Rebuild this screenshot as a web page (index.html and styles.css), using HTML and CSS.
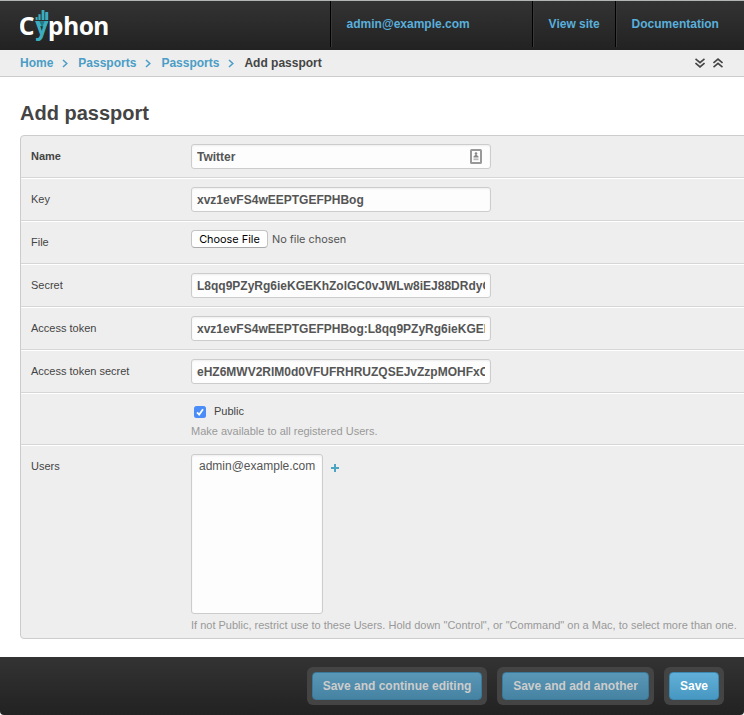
FILE: index.html
```html
<!DOCTYPE html>
<html lang="en">
<head>
<meta charset="utf-8">
<title>Add passport | Cyphon</title>
<link rel="stylesheet" href="styles.css">
</head>
<body>
<header class="topbar">
  <svg class="logo" width="100" height="48" viewBox="0 0 100 48" role="img" aria-label="Cyphon">
    <text class="word" y="33.5" x="-1.2">C</text>
    <text class="word" y="33.5" x="28 43.2 58.8 73.2">phon</text>
    <text class="word teal" x="15.3" y="33.5" textLength="13" lengthAdjust="spacingAndGlyphs">y</text>
    <g class="bars">
      <rect x="15.6" y="16" width="2" height="3"/>
      <rect x="18.4" y="13.2" width="2.2" height="5.8"/>
      <rect x="21.6" y="9" width="2.8" height="10"/>
      <rect x="25.2" y="11" width="3" height="8"/>
    </g>
    <path class="bars" d="M15.6 20.2h12.6l-1.8 4.8h-8.8z"/>
    <path class="facet" d="M19.5 20.5h5l-2.3 6z"/>
  </svg>
  <nav class="tools">
    <a class="user">admin@example.com</a>
    <a class="site">View site</a>
    <a class="docs">Documentation</a>
  </nav>
</header>
<div class="crumbs">
  <a>Home</a>
  <svg class="sep" width="6" height="9" viewBox="0 0 6 9"><path d="M1 1l3.8 3.5L1 8"/></svg>
  <a>Passports</a>
  <svg class="sep" width="6" height="9" viewBox="0 0 6 9"><path d="M1 1l3.8 3.5L1 8"/></svg>
  <a>Passports</a>
  <svg class="sep" width="6" height="9" viewBox="0 0 6 9"><path d="M1 1l3.8 3.5L1 8"/></svg>
  <span>Add passport</span>
  <div class="toggles">
    <svg width="10" height="10" viewBox="0 0 10 10"><path d="M.5 .8L5 4.7 9.5.8M.5 5L5 8.9 9.5 5"/></svg>
    <svg width="10" height="10" viewBox="0 0 10 10"><path d="M.5 5L5 1.1 9.5 5M.5 9.2L5 5.3 9.5 9.2"/></svg>
  </div>
</div>
<main>
  <h1>Add passport</h1>
  <section class="module">
    <div class="row first"><label class="required">Name</label>
      <div class="field"><span class="value">Twitter</span>
        <svg class="contact" width="12" height="15" viewBox="0 0 12 15"><rect x="1" y="1" width="10" height="13" rx=".6"/><circle cx="6" cy="4.6" r="1.3"/><path d="M3.5 8.4V7.4L5.2 6h1.6l1.7 1.4v1z"/><path class="base" d="M3.5 9.4h5v1.8h-5z"/></svg>
      </div></div>
    <div class="row"><label>Key</label><div class="field"><span class="value">xvz1evFS4wEEPTGEFPHBog</span></div></div>
    <div class="row"><label>File</label><div class="file"><button class="choose">Choose File</button><span>No file chosen</span></div></div>
    <div class="row"><label>Secret</label><div class="field"><span class="value">L8qq9PZyRg6ieKGEKhZolGC0vJWLw8iEJ88DRdyOg</span></div></div>
    <div class="row"><label>Access token</label><div class="field"><span class="value">xvz1evFS4wEEPTGEFPHBog:L8qq9PZyRg6ieKGEKhZol</span></div></div>
    <div class="row"><label>Access token secret</label><div class="field"><span class="value">eHZ6MWV2RlM0d0VFUFRHRUZQSEJvZzpMOHFxOVBa</span></div></div>
    <div class="row public">
      <div class="check">
        <svg width="12" height="12" viewBox="0 0 12 12"><rect width="12" height="12" rx="2.5"/><path d="M3 6.4l2.2 2.2L9 3.2"/></svg>
        <span>Public</span>
      </div>
      <p class="help">Make available to all registered Users.</p>
    </div>
    <div class="row users"><label>Users</label>
      <div class="content">
        <div class="picker"><div class="select">admin@example.com</div>
          <svg class="plus" width="8" height="8" viewBox="0 0 8 8"><path d="M4 0v8M0 4h8"/></svg></div>
        <p class="help">If not Public, restrict use to these Users. Hold down "Control", or "Command" on a Mac, to select more than one.</p>
      </div></div>
  </section>
</main>
<footer>
  <div class="wrap dim continue"><button>Save and continue editing</button></div>
  <div class="wrap dim another"><button>Save and add another</button></div>
  <div class="wrap save"><button>Save</button></div>
</footer>
</body>
</html>
```
FILE: styles.css
```css
* { box-sizing: border-box; }
body {
  margin: 0;
  height: 715px;
  overflow: hidden;
  display: flex;
  flex-direction: column;
  background: #fff;
  color: #444;
  font: 11px/15px "Liberation Sans", Arial, sans-serif;
}
svg { display: block; flex: none; }
a { color: #309bbf; white-space: nowrap; }
button { font-family: inherit; white-space: nowrap; padding: 0; }

.topbar {
  height: 50px;
  flex: none;
  display: flex;
  justify-content: space-between;
  border-top: 1px solid #b2b5b4;
  padding-left: 20px;
  background: linear-gradient(#333, #222);
}
.word { font: bold 24.5px "Noto Sans", sans-serif; fill: #fff; }
.word.teal { fill: #3badbf; }
.bars { fill: #3badbf; }
.facet { fill: #257985; }
.tools { display: flex; height: 46px; font-weight: bold; font-size: 12px; }
.tools a {
  color: #59afdc;
  padding: 16px 0 0 15.6px;
  border-left: 1px solid #000;
  box-shadow: inset 1px 0 #383838;
}
.user { width: 202px; }
.site { width: 83px; }
.docs { width: 129px; }

.crumbs {
  height: 27px;
  flex: none;
  display: flex;
  align-items: center;
  padding: 0 21px 0 20px;
  background: #eee;
  border-bottom: 1px solid #ccc;
  font-size: 12px;
  font-weight: bold;
}
.crumbs a { color: #4a9dc6; }
.sep { margin: 0 10px 0 9px; fill: none; stroke: #4a9dc6; stroke-width: 1.5; }
.toggles { margin-left: auto; display: flex; gap: 8px; }
.toggles path { fill: none; stroke: #444; stroke-width: 1.6; }

main { flex: 1; padding-left: 20px; }
h1 { margin: 25px 0 10px; font-size: 20px; line-height: 23px; }
.module {
  width: 760px;
  border: 1px solid #ccc;
  border-radius: 4px;
  background: #eee;
}
.row {
  display: flex;
  height: 43px;
  padding: 8px 10px 0;
  border-top: 1px solid #fff;
  border-bottom: 1px solid #d6d6d6;
}
.row.first { height: 42px; border-top: 0; }
label { width: 160px; flex: none; padding-top: 5px; }
.required { font-weight: bold; }
.field {
  width: 300px;
  height: 25px;
  display: flex;
  align-items: center;
  padding: 0 5px;
  border: 1px solid #ccc;
  border-radius: 3px;
  background: #fdfdfd;
  box-shadow: inset 0 1px 2px #eee;
}
.value {
  flex: 1;
  min-width: 0;
  padding-top: 2px;
  overflow: hidden;
  white-space: nowrap;
  font-size: 12px;
  font-weight: bold;
  color: #555;
}
.contact { margin-right: 3px; fill: #888; }
.contact rect { fill: none; stroke: #999; stroke-width: 2; }
.contact .base { fill: #bbb; }
.file { display: flex; font-family: Inter, sans-serif; font-size: 10.9px; }
.choose {
  width: 77px;
  height: 18px;
  margin-right: 4px;
  border: 1px solid #c4c4c4;
  border-bottom-color: #aaa;
  border-radius: 4px;
  background: #fff;
  color: #000;
  font-size: 10.9px;
}
.file span { line-height: 18px; color: #555; }
.public { height: 52px; flex-direction: column; padding: 10px 0 0 170px; }
.check { display: flex; align-items: center; gap: 8px; padding-left: 3px; height: 15px; }
.check rect { fill: #4b8df8; }
.check path { fill: none; stroke: #fff; stroke-width: 1.7; }
.help { margin: 5px 0 0; color: #999; white-space: nowrap; line-height: 15px; }
.users { height: 193px; border-bottom: 0; }
.picker { display: flex; }
.select {
  width: 132px;
  height: 160px;
  padding: 4px 7px;
  border: 1px solid #ccc;
  border-radius: 3px;
  background: #fdfdfd;
  box-shadow: inset 0 1px 2px #eee;
  color: #555;
  font-size: 12px;
}
.plus { margin: 10px 0 0 8px; }
.plus path { stroke: #4ba5c3; stroke-width: 2; }
.users .help { margin-top: 4px; }

footer {
  height: 58px;
  flex: none;
  display: flex;
  justify-content: flex-end;
  gap: 10px;
  padding: 10px 20px;
  background: linear-gradient(#333, #222);
  border-radius: 0 0 4px 4px;
}
.wrap { padding: 5px; border-radius: 6px; background: #444; }
.wrap button {
  width: 100%;
  height: 28px;
  border: 1px solid #3a8ab3;
  border-radius: 4px;
  background: linear-gradient(#62b0da, #4697c1);
  color: #fff;
  font-size: 12px;
  font-weight: bold;
}
.wrap.dim button {
  border-color: #39799b;
  background: linear-gradient(#5a97b6, #4682a2);
  color: #ccc;
}
.continue { width: 180px; }
.another { width: 157px; }
.save { width: 60px; }
```
